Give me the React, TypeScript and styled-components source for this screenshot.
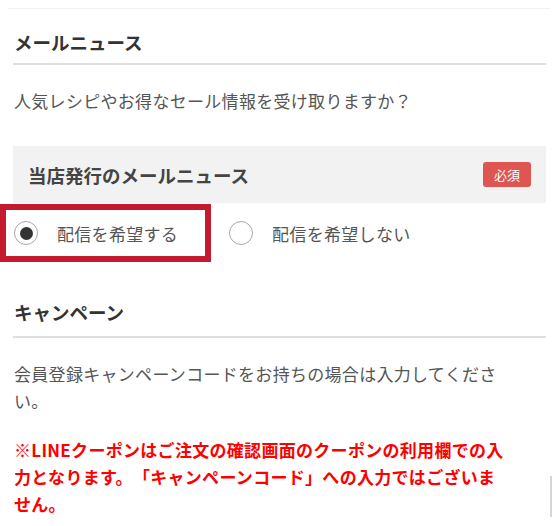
import React, { useState } from "react";
import styled, { createGlobalStyle } from "styled-components";

const GlobalStyle = createGlobalStyle`
  body {
    margin: 0;
    background: #fff;
    font-family: "Noto Sans CJK JP", "Noto Sans", sans-serif;
    text-spacing-trim: space-all;
  }
`;

const Page = styled.div`
  position: relative;
  width: 560px;
  padding: 8px 0 0;
  box-sizing: border-box;
`;

const TopRule = styled.div`
  height: 1px;
  margin: 0 10px 0 8px;
  background: #f1f1f1;
`;

const Content = styled.div`
  padding: 0 14px 0 13px;
`;

const SectionTitle = styled.h2<{ $top: number; $pad: number }>`
  margin: ${(p) => p.$top}px 0 0;
  padding: 0 1px ${(p) => p.$pad}px;
  font-size: 18.5px;
  line-height: 26px;
  font-weight: 700;
  color: #333;
  border-bottom: 2px solid #dedede;
`;

const Lead = styled.p<{ $top: number }>`
  margin: ${(p) => p.$top}px 0 0;
  padding-left: 1px;
  width: 493px;
  font-size: 17px;
  letter-spacing: 0.3px;
  line-height: 27px;
  color: #555;
`;

const Notice = styled.p`
  margin: 22px 0 0;
  padding-left: 1px;
  width: 493px;
  font-size: 17px;
  letter-spacing: 0.3px;
  line-height: 27px;
  font-weight: 700;
  color: #ff0000;
`;

const FieldHead = styled.div`
  margin-top: 32px;
  height: 57px;
  padding: 0 15px;
  display: flex;
  align-items: center;
  justify-content: space-between;
  background: #f2f2f2;
`;

const FieldLabel = styled.span`
  font-size: 18.5px;
  font-weight: 700;
  color: #444;
`;

const Required = styled.span`
  display: inline-flex;
  align-items: center;
  justify-content: center;
  width: 48px;
  height: 25px;
  border-radius: 3px;
  background: #de5552;
  color: #fff;
  font-size: 13px;
`;

const Options = styled.div`
  margin: 7px 0 0 -7px;
  display: flex;
  gap: 16px;
`;

const Option = styled.label<{ $marked?: boolean }>`
  display: flex;
  align-items: center;
  gap: 19px;
  height: 46px;
  padding: 0 27px 0 8px;
  outline: ${(p) => (p.$marked ? "6px solid #c41a30" : "none")};
  cursor: pointer;
  font-size: 17px;
  letter-spacing: 0.3px;
  color: #555;
`;

const Radio = styled.span<{ $checked: boolean }>`
  width: 24px;
  height: 24px;
  box-sizing: border-box;
  border-radius: 50%;
  border: 1.5px solid #a9a9a9;
  display: flex;
  align-items: center;
  justify-content: center;
  &::after {
    content: "";
    width: 13px;
    height: 13px;
    border-radius: 50%;
    background: ${(p) => (p.$checked ? "#333" : "transparent")};
  }
`;

const ScrollThumb = styled.div`
  position: absolute;
  left: 550px;
  top: 476px;
  width: 2px;
  height: 42px;
  background: #d6d6d6;
`;

export default () => {
  const [wants, setWants] = useState(true);

  return (
    <Page>
      <GlobalStyle />
      <TopRule />
      <Content>
        <SectionTitle $top={20} $pad={8}>
          メールニュース
        </SectionTitle>
        <Lead $top={22}>人気レシピやお得なセール情報を受け取りますか？</Lead>
        <FieldHead>
          <FieldLabel>当店発行のメールニュース</FieldLabel>
          <Required>必須</Required>
        </FieldHead>
        <Options>
          <Option $marked onClick={() => setWants(true)}>
            <Radio $checked={wants} />
            配信を希望する
          </Option>
          <Option onClick={() => setWants(false)}>
            <Radio $checked={!wants} />
            配信を希望しない
          </Option>
        </Options>
        <SectionTitle $top={43} $pad={11}>
          キャンペーン
        </SectionTitle>
        <Lead $top={22}>
          会員登録キャンペーンコードをお持ちの場合は入力してください。
        </Lead>
        <Notice>
          ※LINEクーポンはご注文の確認画面のクーポンの利用欄での入力となります。「キャンペーンコード」への入力ではございま
          <br />
          せん。
        </Notice>
      </Content>
      <ScrollThumb />
    </Page>
  );
};
